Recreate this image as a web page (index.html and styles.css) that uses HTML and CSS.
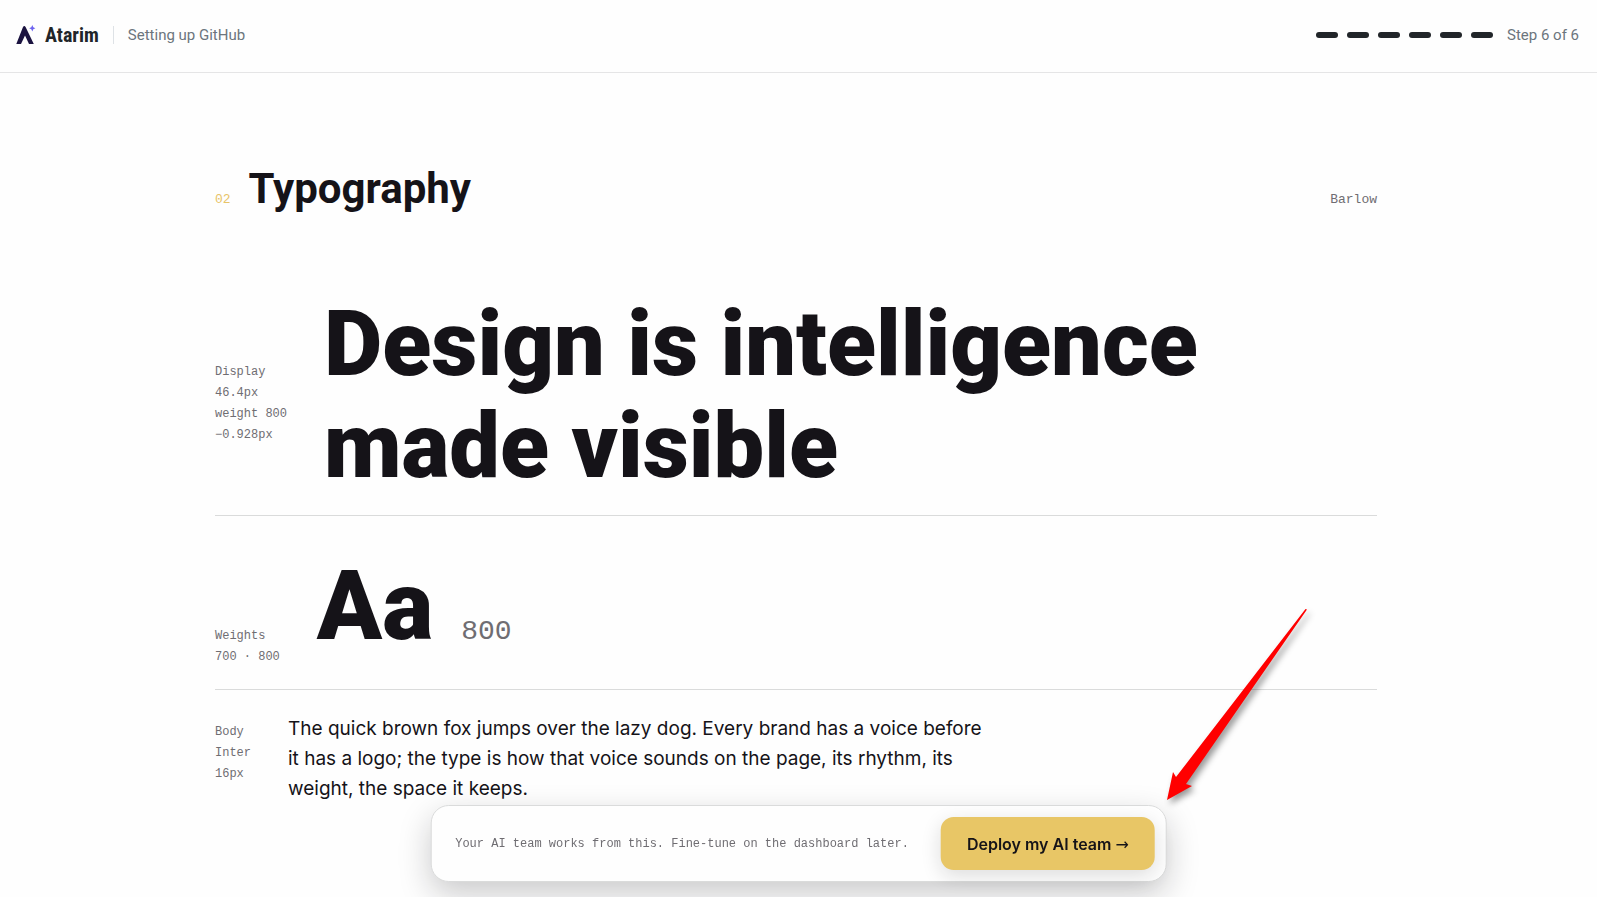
FILE: index.html
```
<!DOCTYPE html>
<html lang="en">
<head>
  <meta charset="UTF-8" />
  <title>Atarim - Setting up GitHub</title>
  <meta name="viewport" content="width=device-width, initial-scale=1" />
  <link rel="stylesheet" href="styles.css">
</head>
<body>
  <header class="topbar">
    <div class="brand">
      <svg class="logo" viewBox="0 0 20 20" width="20" height="20" aria-hidden="true">
        <path d="M0.3 19 L6.9 2.2 Q8.3 0 9.7 2.2 L17.8 19 H13 L9 10.500 L5 19 Z" fill="#1b1340" />
        <path d="M16.3 0 L17.3 2.200 L19.4 3.2 L17.3 4.200 L16.3 6.4 L15.3 4.200 L13.2 3.2 L15.3 2.200 Z" fill="#6d63f0" />
      </svg>
      <span class="brand-name">Atarim</span>
      <span class="brand-page">Setting up GitHub</span>
    </div>
    <div class="steps">
      <span class="dash"></span>
      <span class="dash"></span>
      <span class="dash"></span>
      <span class="dash"></span>
      <span class="dash"></span>
      <span class="dash"></span>
      <span class="steps-label">Step 6 of 6</span>
    </div>
  </header>

  <main class="page">
    <section class="typography">
      <div class="section-head">
        <span class="section-num">02</span>
        <h2>Typography</h2>
        <span class="section-font">Barlow</span>
      </div>

      <div class="row">
        <div class="label">Display<br />46.4px<br />weight 800<br />−0.928px</div>
        <div class="display">Design is intelligence<br />made visible</div>
      </div>

      <div class="row">
        <div class="label">Weights<br />700 · 800</div>
        <div class="weight">
          <span class="specimen">Aa</span>
          <span class="weight-num">800</span>
        </div>
      </div>

      <div class="row">
        <div class="label">Body<br />Inter<br />16px</div>
        <p class="body-copy">The quick brown fox jumps over the lazy dog. Every brand has a voice before it has a logo; the type is how that voice sounds on the page, its rhythm, its weight, the space it keeps.</p>
      </div>
    </section>
  </main>

  <div class="deploy-bar">
    <span class="deploy-note">Your AI team works from this. Fine-tune on the dashboard later.</span>
    <button class="deploy-button" type="button">Deploy my AI team <span class="deploy-arrow">→</span></button>
  </div>

  <svg class="arrow" viewBox="0 0 160 210" width="160" height="210" aria-hidden="true">
    <path d="M7 200 L13 172 L16 177 L145.5 9 L147 9.500 L26 184 L32 186 Z" fill="#ff0000" />
  </svg>
</body>
</html>
```

FILE: styles.css
```
* {
  box-sizing: border-box;
}
body {
  margin: 0;
  min-height: 100vh;
  overflow: hidden;
  background: #fefefe;
  color: #151318;
  font-family: Inter, sans-serif;
}

/* top bar */
.topbar {
  display: flex;
  justify-content: space-between;
  align-items: center;
  height: 73px;
  padding: 0 18px 3px 16px;
  border-bottom: 1px solid #e5e5e6;
  font-family: Roboto, sans-serif;
  font-size: 15px;
  color: #6c757d;
}
.brand,
.steps {
  display: flex;
  align-items: center;
}
.brand-name {
  margin-left: 9px;
  font-family: "Liberation Sans Narrow", "Roboto Condensed", Roboto, sans-serif;
  font-size: 20px;
  font-weight: 700;
  color: #212529;
}
.brand-page {
  margin-left: 14px;
  padding-left: 14px;
  border-left: 1px solid #dee2e6;
}
.steps {
  gap: 9px;
}
.dash {
  width: 22px;
  height: 6px;
  border-radius: 3px;
  background: #212529;
}
.steps-label {
  margin-left: 5px;
}

/* typography section */
.page {
  padding: 92px 220px 0 215px;
}
.section-head {
  display: flex;
  align-items: baseline;
  gap: 18px;
  margin-bottom: 57px;
}
.section-num,
.section-font,
.label,
.weight-num,
.deploy-note {
  font-family: "Liberation Mono", monospace;
  color: #6f6d72;
}
.section-num {
  font-size: 13px;
  color: #e8c468;
}
.section-font {
  margin-left: auto;
  font-size: 13px;
}
h2 {
  margin: 0;
  font-family: Roboto, sans-serif;
  font-size: 42px;
  font-weight: 700;
  line-height: 48px;
}
.row {
  display: flex;
  align-items: baseline;
  gap: 37px;
  padding: 24px 0 17px;
  border-bottom: 1px solid #dadbdb;
}
.row:last-child {
  border-bottom: 0;
}
.label {
  flex: none;
  font-size: 12px;
  line-height: 21px;
}
.display,
.specimen {
  font-family: Roboto, sans-serif;
  font-size: 90px;
  font-weight: 900;
  line-height: 102px;
}
.specimen {
  font-size: 96px;
  line-height: 132px;
}
.weight {
  display: flex;
  align-items: baseline;
  gap: 28px;
}
.weight-num {
  font-size: 28px;
}
.body-copy {
  margin: 0;
  max-width: 696px;
  font-size: 19px;
  line-height: 30px;
}

/* floating bar */
.deploy-bar {
  position: fixed;
  left: 50%;
  bottom: 15px;
  transform: translateX(-50%);
  display: flex;
  align-items: center;
  gap: 32px;
  padding: 11px 11px 11px 24px;
  background: #fefefe;
  border: 1px solid #dadbdb;
  border-radius: 18px;
  box-shadow: 0 12px 32px rgba(20, 18, 24, 0.22);
  white-space: nowrap;
}
.deploy-note {
  font-size: 12px;
}
.deploy-button {
  padding: 0 26px;
  height: 53px;
  border: 0;
  border-radius: 13px;
  background: #e8c666;
  color: #151318;
  font-family: Inter, sans-serif;
  font-size: 16px;
  font-weight: 600;
  cursor: pointer;
  box-shadow: 0 6px 20px rgba(20, 18, 24, 0.14);
}
.deploy-arrow {
  font-family: "DejaVu Sans", sans-serif;
  font-weight: 400;
}

/* red pointer over the page */
.arrow {
  position: absolute;
  left: 1160px;
  top: 600px;
  pointer-events: none;
  filter: drop-shadow(3px 4px 3px rgba(0, 0, 0, 0.4));
}
```
